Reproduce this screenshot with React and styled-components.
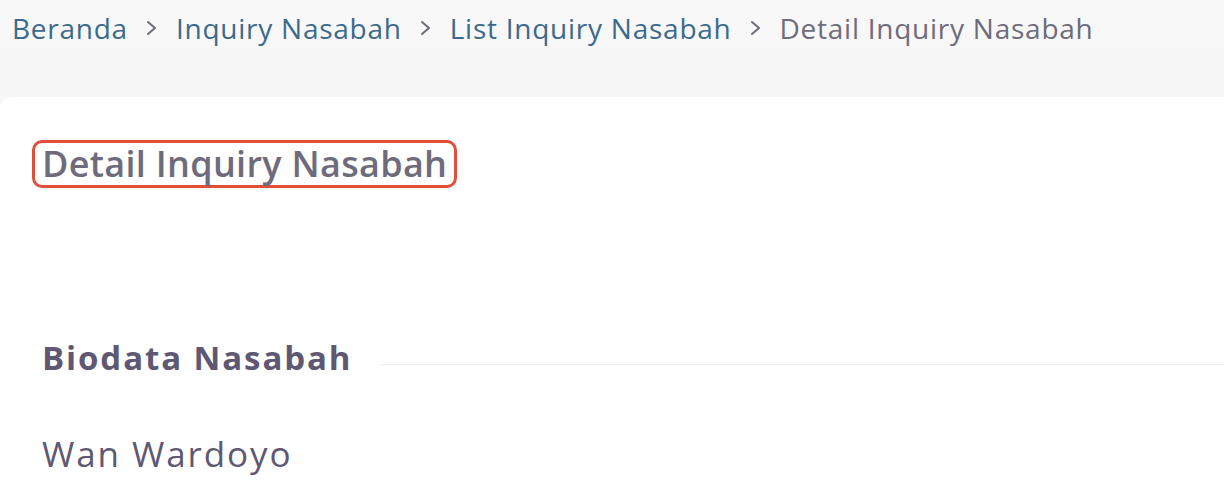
import React from "react";
import styled, { createGlobalStyle } from "styled-components";

const GlobalStyle = createGlobalStyle`
  html, body {
    margin: 0;
    padding: 0;
    background: #f8f8f8;
    font-family: "Open Sans", "Noto Sans", sans-serif;
    overflow: hidden;
  }
`;

const Page = styled.div`
  width: 1224px;
  height: 497px;
  overflow: hidden;
  background: linear-gradient(180deg, #f8f8f8 0%, #f5f5f5 60%, #eeeeee 97px, #f8f8f8 97px);
`;

const Breadcrumb = styled.nav`
  display: flex;
  align-items: flex-start;
  gap: 17px;
  height: 97px;
  box-sizing: border-box;
  padding: 9px 0 0 12px;
  font-size: 28px;
  line-height: 38px;
  letter-spacing: 0.75px;
`;

const Crumb = styled.a`
  color: ${(props) => (props.active ? "#6e6b7b" : "#3b6a8c")};
  text-decoration: none;
  white-space: nowrap;
`;

const Chevron = styled.svg`
  width: 14px;
  height: 38px;
  color: #6e6b7b;
  flex-shrink: 0;
`;

const Card = styled.section`
  background: #ffffff;
  border-radius: 12px 0 0 0;
  height: 400px;
  padding: 43px 0 0 32px;
  box-sizing: border-box;
`;

const TitleBox = styled.div`
  display: inline-block;
  border: 3px solid #e04f3b;
  border-radius: 10px;
  padding: 0 7px;
  height: 48px;
  box-sizing: border-box;
`;

const Title = styled.h1`
  margin: 0;
  font-size: 36px;
  font-weight: 600;
  line-height: 42px;
  color: #6e6b7b;
  letter-spacing: 0.3px;
`;

const SectionHead = styled.div`
  display: flex;
  align-items: center;
  gap: 28px;
  margin-top: 150px;
  padding-left: 10px;
`;

const SectionTitle = styled.h2`
  margin: 0;
  font-size: 33px;
  font-weight: 700;
  line-height: 40px;
  color: #5e5873;
  white-space: nowrap;
  letter-spacing: 1.9px;
`;

const Divider = styled.div`
  flex: 1;
  height: 1px;
  background: #ebe9f1;
  margin-top: 12px;
`;

const Name = styled.p`
  margin: 56px 0 0;
  padding-left: 10px;
  font-size: 35px;
  font-weight: 500;
  line-height: 40px;
  color: #5e5873;
  letter-spacing: 1.9px;
`;

const Sep = () => (
  <Chevron viewBox="0 0 14 38" fill="none">
    <path d="M3 13 L10 19 L3 25" stroke="currentColor" strokeWidth="2" strokeLinecap="round" strokeLinejoin="round" />
  </Chevron>
);

export default function App() {
  return (
    <Page>
      <GlobalStyle />
      <Breadcrumb>
        <Crumb href="#">Beranda</Crumb>
        <Sep />
        <Crumb href="#">Inquiry Nasabah</Crumb>
        <Sep />
        <Crumb href="#">List Inquiry Nasabah</Crumb>
        <Sep />
        <Crumb active>Detail Inquiry Nasabah</Crumb>
      </Breadcrumb>
      <Card>
        <TitleBox>
          <Title>Detail Inquiry Nasabah</Title>
        </TitleBox>
        <SectionHead>
          <SectionTitle>Biodata Nasabah</SectionTitle>
          <Divider />
        </SectionHead>
        <Name>Wan Wardoyo</Name>
      </Card>
    </Page>
  );
}
